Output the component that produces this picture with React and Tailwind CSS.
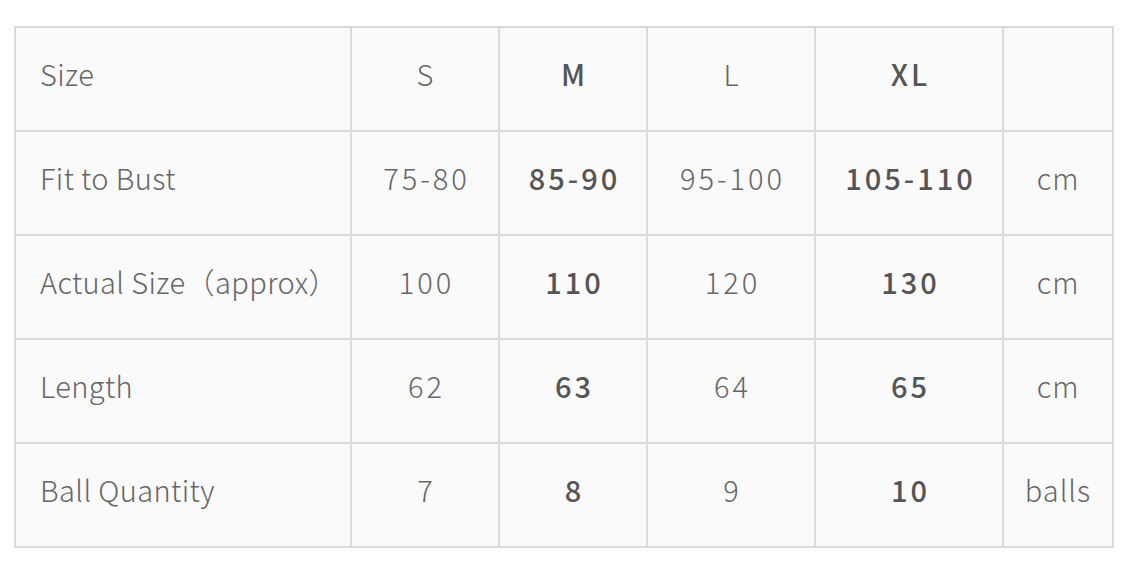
// App.jsx — size chart table
const rows = [
  { label: 'Size', values: ['S', 'M', 'L', 'XL'], unit: '' },
  { label: 'Fit to Bust', values: ['75-80', '85-90', '95-100', '105-110'], unit: 'cm' },
  { label: 'Actual Size（approx）', values: ['100', '110', '120', '130'], unit: 'cm' },
  { label: 'Length', values: ['62', '63', '64', '65'], unit: 'cm' },
  { label: 'Ball Quantity', values: ['7', '8', '9', '10'], unit: 'balls' },
];

// M and XL columns are bold
const bold = [false, true, false, true];

export default function App() {
  return (
    <div className="w-[1128px] h-[572px] bg-white pl-[14px] pt-[26px] font-['Noto_Sans_CJK_JP','Liberation_Sans',sans-serif] text-[#666]">
      <div className="grid grid-cols-[334px_146px_146px_166px_186px_108px] auto-rows-[102px] gap-[2px] p-[2px] bg-[#dadada] w-[1100px]">
        {rows.map((row) => (
          <div key={row.label} className="contents">
            <div className="bg-[#fafafa] flex items-center pl-[24px] pb-[10px] text-[29px] font-light tracking-[0.4px]">
              {row.label}
            </div>
            {row.values.map((v, i) => (
              <div
                key={i}
                className={
                  'bg-[#fafafa] flex items-center justify-center pb-[10px] text-[29px] tracking-[3px] ' +
                  (bold[i] ? 'font-medium text-[#555]' : 'font-light')
                }
              >
                <span className="-mr-[3px]">{v}</span>
              </div>
            ))}
            <div className="bg-[#fafafa] flex items-center justify-center pb-[10px] text-[29px] font-light tracking-[1px]">
              {row.unit}
            </div>
          </div>
        ))}
      </div>
    </div>
  );
}
